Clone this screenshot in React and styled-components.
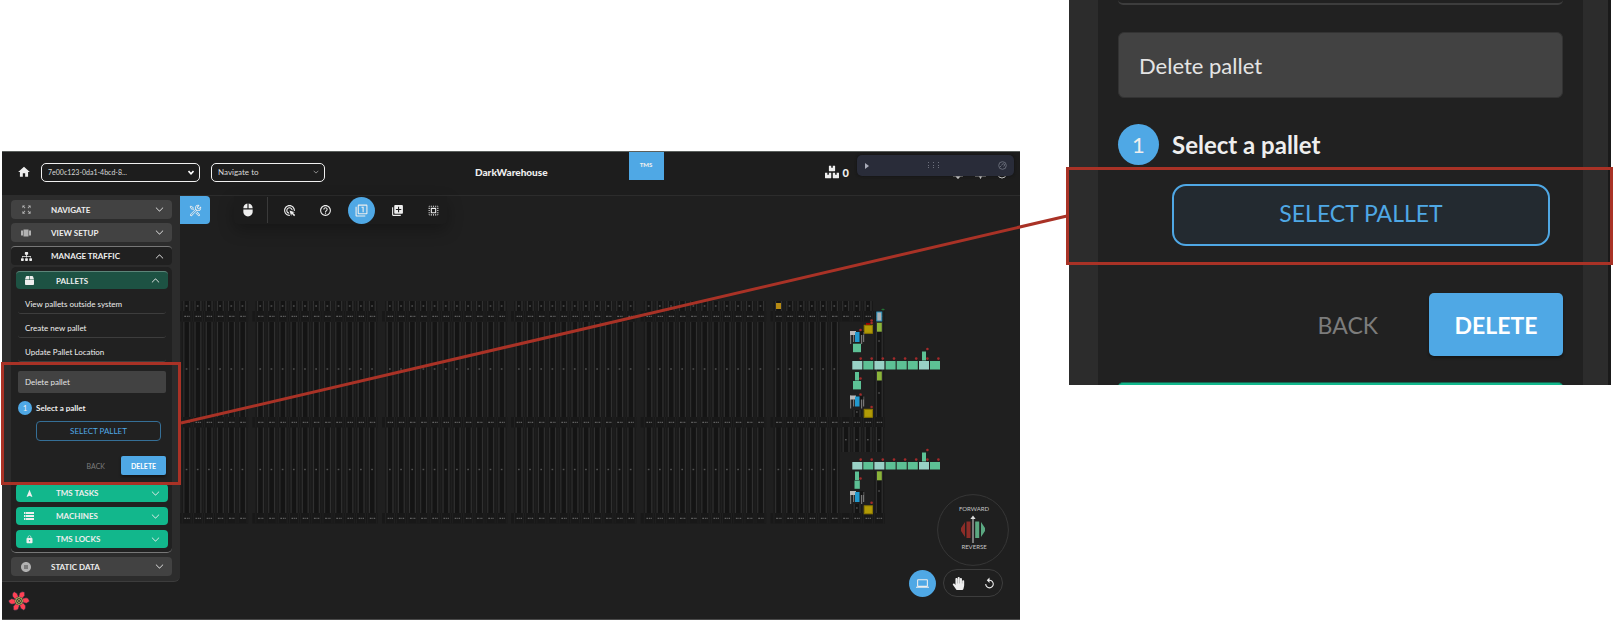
import React from "react";
import styled, { createGlobalStyle, css } from "styled-components";
import {
  MdHome, MdMouse, MdAdsClick, MdHelpOutline, MdFilter1, MdLibraryAdd, MdSelectAll,
  MdZoomOutMap, MdViewCarousel, MdNavigation, MdStorage, MdLock, MdPauseCircleFilled,
  MdLaptop, MdReplay,
} from "react-icons/md";
import { FaSitemap, FaBox, FaBoxes, FaHandPaper } from "react-icons/fa";
import { VscTools } from "react-icons/vsc";
import { BsChevronDown, BsChevronUp } from "react-icons/bs";

const blue = "#4fa8e5";
const red = "#a93226";

const GlobalStyle = createGlobalStyle`
  * { box-sizing: border-box; }
  body { margin: 0; background: #fff; font-family: Lato, "Liberation Sans", sans-serif; color: #eee; }
  button, select { font: inherit; color: inherit; margin: 0; padding: 0; border: 0; background: none; cursor: pointer; }
  svg { display: block; flex: none; }
`;

const Page = styled.main`
  position: relative;
  display: grid;
  grid-template-columns: minmax(0, 1fr) 542px;
  gap: 49px;
  align-items: start;
  padding: 0 2px;
`;

/* ---------- application window ---------- */

const AppWindow = styled.section`
  margin-top: 151px;
  background: #1f1f1f;
  border-top: 1px solid #5a5f5c;
`;

const Header = styled.header`
  position: relative;
  display: flex;
  align-items: center;
  height: 44px;
  padding: 0 6px 3px 15px;
  background: #1d1d1d;
  border-bottom: 1px solid #2c2c2c;
  font-size: 8px;
`;

const SelectBox = styled.label`
  display: flex;
  align-items: center;
  width: ${(p) => p.$width};
  height: 19px;
  margin-left: 10px;
  padding: 0 5px 0 6px;
  border: 1px solid #f0f0f0;
  border-radius: 5px;
  color: #d8d8d8;
  font-size: ${(p) => (p.$dense ? "7px" : "8px")};

  & + & { margin-left: 11px; }
  select { flex: 1; min-width: 0; appearance: none; outline: 0; }
`;

const Title = styled.h1`
  margin: 0 0 0 150px;
  font-size: 10px;
  line-height: 14px;
  font-weight: 900;
`;

const TmsTab = styled.button`
  align-self: flex-start;
  height: 28px;
  width: 35px;
  margin-left: 81px;
  padding-bottom: 4px;
  background: ${blue};
  font-size: 6px;
  font-weight: 900;
`;

const PalletCount = styled.div`
  display: flex;
  align-items: center;
  gap: 4px;
  margin-left: auto;
  margin-right: 8px;
  font-size: 11px;
  font-weight: 900;
`;

const StatusArea = styled.div`
  position: relative;
  align-self: flex-start;
  width: 157px;
  margin-top: 3px;
`;

const FloatingBar = styled.div`
  position: relative;
  display: flex;
  align-items: center;
  justify-content: space-between;
  height: 21px;
  padding: 0 7px;
  border-radius: 5px;
  background: #292c39;
  box-shadow: 0 0 3px #111;
  color: #777b88;
`;

const HiddenIcons = styled.div`
  position: absolute;
  top: 10px;
  right: 8px;
`;

const Stage = styled.div`
  position: relative;
  display: flex;
  align-items: flex-start;
  min-height: 424px;
  border-bottom: 1px solid #4a4a4a;
`;

const MapDrawing = styled.svg`
  position: absolute;
  inset: 0;
  width: 100%;
  height: 100%;
`;

const LeftColumn = styled.div`
  position: relative;
  width: 178px;
`;

const Sidebar = styled.nav`
  display: flex;
  flex-direction: column;
  gap: 4px;
  padding: 4px 8px 5px 9px;
  background: #2c2c2c;
  border-bottom: 1px solid #3c3c3c;
  border-radius: 0 0 6px 0;
`;

const Group = styled.div`
  display: flex;
  flex-direction: column;
  gap: 2px;
`;

const sectionTones = {
  grey: css`background: #424242;`,
  open: css`background: #202020; border-top: 1px solid #777;`,
  darkGreen: css`background: #1d5243; border-top: 1px solid #5c8579;`,
  green: css`background: #12b78c;`,
};

const SectionButton = styled.button`
  display: grid;
  grid-template-columns: ${(p) => (p.$nested ? "38px" : "36px")} 1fr 10px;
  align-items: center;
  width: 100%;
  height: ${(p) => (p.$nested ? "18px" : "19px")};
  padding: 0 7px 0 ${(p) => (p.$nested ? "2px" : "4px")};
  border-radius: 4px;
  font-size: 8px;
  font-weight: 700;
  text-align: left;
  ${(p) => sectionTones[p.$tone]}
`;

const IconSlot = styled.span`
  display: grid;
  width: 22px;
  place-items: center;
  opacity: ${(p) => (p.$dim ? 0.65 : 1)};
`;

const TrafficPanel = styled.div`
  display: flex;
  flex-direction: column;
  padding: 4px 4px 4px 5px;
  background: #212121;
  border-bottom: 1px solid #777;
  border-radius: 5px;
`;

const TaskStack = styled.div`
  display: flex;
  flex-direction: column;
  gap: 5px;
`;

const TaskArea = styled.div`
  display: flex;
  flex-direction: column;
  padding: 1px 2px 0;
`;

const TaskLink = styled.button`
  height: 24px;
  padding: 5px 7px 0;
  border-bottom: 1px solid #3d3d3d;
  border-radius: 3px;
  font-size: 8px;
  text-align: left;
`;

const ReactFlower = styled.button`
  display: block;
  margin: 8px 0 0 6px;
`;

const ToolsButton = styled.button`
  position: relative;
  display: grid;
  place-items: center;
  width: 30px;
  height: 28px;
  border-radius: 0 4px 4px 0;
  background: ${blue};
`;

const Toolbar = styled.div`
  position: relative;
  display: flex;
  align-items: center;
  height: 28px;
  margin-left: 24px;
  border-radius: 0 0 4px 4px;
  background: #1c1c1c;
  box-shadow: 0 6px 16px rgba(0, 0, 0, 0.28);
`;

const ToolSlot = styled.button`
  display: grid;
  place-items: center;
  width: 27px;
  height: 27px;
  margin-right: ${(p) => (p.$first ? "6px" : "9px")};
  border-radius: 50%;
  background: ${(p) => (p.$active ? blue : "transparent")};
  &:last-child { margin-right: 0; }
`;

const Divider = styled.span`
  width: 1px;
  height: 26px;
  margin-right: 8px;
  background: #3a3a3a;
`;

const ViewControls = styled.div`
  position: absolute;
  right: 17px;
  bottom: 22px;
  display: flex;
  align-items: center;
  gap: 7px;
`;

const RoundButton = styled.button`
  display: grid;
  place-items: center;
  width: 27px;
  height: 27px;
  border-radius: 50%;
  background: ${blue};
`;

const Pill = styled.div`
  display: flex;
  align-items: center;
  justify-content: space-between;
  width: 60px;
  height: 28px;
  padding: 0 6px 0 8px;
  border: 1px solid #3d3d3d;
  border-radius: 14px;
`;

/* ---------- delete pallet form, compact and enlarged ---------- */

const FormTitle = styled.div`
  display: flex;
  flex: none;
  align-items: center;
  height: ${(p) => (p.$large ? "66px" : "22px")};
  margin-top: ${(p) => (p.$large ? "27px" : "9px")};
  padding: 0 ${(p) => (p.$large ? "20px" : "7px")};
  border: ${(p) => (p.$large ? "1px solid #333" : "0")};
  border-radius: ${(p) => (p.$large ? "6px" : "2px")};
  background: #424242;
  color: #e4e4e4;
  font-size: ${(p) => (p.$large ? "22px" : "8px")};
`;

const StepRow = styled.div`
  display: flex;
  flex: none;
  align-items: center;
  gap: ${(p) => (p.$large ? "13px" : "4px")};
  margin-top: ${(p) => (p.$large ? "26px" : "8px")};
  font-size: ${(p) => (p.$large ? "24px" : "8px")};
  line-height: 1;
  font-weight: 700;
`;

const StepNumber = styled.span`
  display: grid;
  place-items: center;
  width: ${(p) => (p.$large ? "41px" : "14px")};
  height: ${(p) => (p.$large ? "41px" : "14px")};
  border-radius: 50%;
  background: ${blue};
  font-size: ${(p) => (p.$large ? "22px" : "8px")};
  font-weight: 400;
`;

const SelectPallet = styled.button`
  flex: none;
  height: ${(p) => (p.$large ? "62px" : "20px")};
  margin: ${(p) => (p.$large ? "19px 13px 0 54px" : "6px 5px 0 18px")};
  padding-bottom: ${(p) => (p.$large ? "4px" : "1px")};
  border: ${(p) => (p.$large ? "2px" : "1px")} solid ${(p) => (p.$large ? blue : "#356f97")};
  border-radius: ${(p) => (p.$large ? "14px" : "4px")};
  background: ${(p) => (p.$large ? "#232a30" : "transparent")};
  color: ${blue};
  font-size: ${(p) => (p.$large ? "23px" : "8px")};
`;

const Actions = styled.div`
  display: flex;
  flex: none;
  justify-content: flex-end;
  align-items: center;
  gap: ${(p) => (p.$large ? "51px" : "16px")};
  margin: ${(p) => (p.$large ? "47px 0 26px" : "15px 0 9px")};
  font-size: ${(p) => (p.$large ? "23px" : "7px")};
`;

const BackButton = styled.button`
  color: #7c7c7c;
`;

const DeleteButton = styled.button`
  width: ${(p) => (p.$large ? "134px" : "45px")};
  height: ${(p) => (p.$large ? "63px" : "19px")};
  border-radius: ${(p) => (p.$large ? "5px" : "2px")};
  background: ${blue};
  box-shadow: 0 2px 3px rgba(0, 0, 0, 0.4);
  color: #fff;
  font-weight: 700;
`;

/* ---------- enlarged crop ---------- */

const Crop = styled.section`
  position: relative;
  display: flex;
  height: 385px;
  background: #1a1a1a;
  padding-right: 3px;
`;

const CropPanel = styled.div`
  flex: 1;
  min-width: 0;
  padding: 0 25px 0 29px;
  background: #2c2c2c;
`;

const CropBody = styled.div`
  display: flex;
  flex-direction: column;
  height: 100%;
  padding: 0 20px;
  background: #212121;
  overflow: hidden;
`;

const CropRule = styled.div`
  height: 5px;
  flex: none;
  border-bottom: 2px solid #3d3d3d;
  border-radius: 0 0 5px 5px;
`;

const NextSection = styled.div`
  height: 20px;
  flex: none;
  border-top: 1px solid #156b54;
  border-radius: 5px 5px 0 0;
  background: #12b78c;
`;

/* ---------- red annotations lying over both ---------- */

const SourceFrame = styled.div`
  position: absolute;
  top: 166px;
  left: -1px;
  right: -1px;
  height: 123px;
  border: 3px solid ${red};
  z-index: 1;
  pointer-events: none;
`;

const CropFrame = styled.div`
  position: absolute;
  top: 167px;
  left: -3px;
  right: -2px;
  height: 98px;
  border: 3px solid ${red};
  pointer-events: none;
`;

const Connector = styled.svg`
  position: absolute;
  top: 216px;
  left: 181px;
  width: calc(100% - 727px);
  height: 207px;
  overflow: visible;
  pointer-events: none;
`;

function DeletePalletForm({ large }) {
  return (
    <>
      <FormTitle $large={large}>Delete pallet</FormTitle>
      <StepRow $large={large}>
        <StepNumber $large={large}>1</StepNumber>
        Select a pallet
      </StepRow>
      <SelectPallet $large={large}>SELECT PALLET</SelectPallet>
      <Actions $large={large}>
        <BackButton>BACK</BackButton>
        <DeleteButton $large={large}>DELETE</DeleteButton>
      </Actions>
    </>
  );
}

function Section({ icon, label, tone = "grey", nested, open, dim }) {
  return (
    <SectionButton $tone={tone} $nested={nested} aria-expanded={!!open}>
      <IconSlot $dim={dim}>{icon}</IconSlot>
      {label}
      {open ? <BsChevronUp size={9} /> : <BsChevronDown size={9} />}
    </SectionButton>
  );
}

/* ---------- warehouse map ---------- */

const PITCH = 11.18;
const bays = [
  { start: 186.7, count: 6 },
  { start: 260.4, count: 11 },
  { start: 390, count: 11 },
  { start: 519, count: 11 },
  { start: 648.8, count: 11 },
  { start: 778.5, count: 10 },
];

function Lane({ x, y, h }) {
  return (
    <g>
      <rect x={x - 5} y={y} width="10" height={h} fill="#191919" />
      <rect x={x - 3.4} y={y} width="1.2" height={h} fill="#303030" />
      <rect x={x + 2.4} y={y} width="1.2" height={h} fill="#303030" />
      <rect x={x - 2} y={y} width="4" height={h} fill="#141414" />
    </g>
  );
}

function Dash({ x, y }) {
  return <path d={`M${x - 2.4} ${y}h1.8m.8 0h1m.6 0h1.2`} stroke="#606060" strokeWidth="1.2" />;
}

function Dot({ x, y }) {
  return <rect x={x - 1} y={y - 0.7} width="1.7" height="1.4" fill="#525252" />;
}

function Racks() {
  return bays.map((bay, b) => {
    const xs = Array.from({ length: bay.count }, (_, i) => bay.start + i * PITCH);
    const end = xs[xs.length - 1];
    const last = b === bays.length - 1;
    return (
      <g key={bay.start}>
        {xs.map((x) => (
          <g key={x}>
            {x < 875 && <Lane x={x} y={301} h={10} />}
            {x < 875 && <Dot x={x} y={306} />}
            {!(last && x > 840) && (
              <>
                <Lane x={x} y={322} h={95} />
                <Lane x={x} y={427} h={86} />
                <Dot x={x} y={369} />
                <Dot x={x} y={469.5} />
              </>
            )}
          </g>
        ))}
        {[311, 417, 513].map((y) => (
          <g key={y}>
            <rect x={bay.start - 8} y={y} width={end - bay.start + 13.5} height="10.5" fill="#181818" />
            {xs.map((x) => (
              <g key={x}>
                <path d={`M${x - 4.5} ${y}v10.5m9 0v-10.5`} stroke="#202020" />
                <Dash x={x} y={y + 5.3} />
              </g>
            ))}
          </g>
        ))}
      </g>
    );
  });
}

const cellXs = [852.3, 863.3, 874.4, 885.6, 896.7, 907.8, 919, 930];
const redMarks = [
  [860.5, 330], [871.6, 320.5], [871.6, 323], [927.4, 349], [860.5, 378.5], [860.5, 394.5],
  [871.6, 407], [927.4, 450], [860.5, 478.5], [871.6, 502.7],
];

function Shuttle({ y }) {
  return (
    <g>
      <path d={`M850.6 ${y}v13m3-9v7m8-11v13m2-12v10`} stroke="#777" strokeWidth="1.2" fill="none" />
      <rect x="850" y={y} width="6" height="4" fill="#b9b9b9" />
      <rect x="860" y={y} width="3.5" height="4" fill="#151515" />
      <rect x="855" y={y + 1} width="4.5" height="10" fill="#2199ce" />
    </g>
  );
}

function Equipment() {
  return (
    <g>
      <Lane x={879.2} y={322} h={95} />
      {[846, 857, 868, 879.2].map((x) => (
        <g key={x}>
          <Lane x={x} y={427} h={25} />
          <Dot x={x} y={439.7} />
        </g>
      ))}
      <Lane x={879.2} y={471} h={42} />
      <Lane x={857} y={410} h={7} />
      <Lane x={857} y={504} h={9} />
      {[341, 393, 491].map((y) => <Dot key={y} x={879.2} y={y} />)}
      {[412, 508].map((y) => <Dot key={y} x={857} y={y} />)}
      <rect x="776" y="303" width="5" height="6" fill="#b68a13" />
      <rect x="876.8" y="312" width="5" height="9" fill="#adb2b5" stroke="#278fbd" />
      <path d="M881.5 309.5h3m-1.5-1v2" stroke="#247235" />
      {[322.7, 371.5, 471.3].map((y) => <rect key={y} x="877" y={y} width="4.8" height="9" fill="#8bb43a" />)}
      <rect x="866" y="323" width="4" height="3" fill="#900" />
      {[325.3, 409.3, 505.8].map((y) => (
        <rect key={y} x="864.2" y={y} width="8.2" height="8" fill="#b29b06" stroke="#8d7900" />
      ))}
      <Shuttle y={331} />
      <Shuttle y={395.5} />
      <Shuttle y={491} />
      <rect x="853" y="343.7" width="8" height="8.5" fill="#5dc195" />
      <rect x="855" y="372" width="4" height="8.5" fill="#5dc195" />
      <rect x="853" y="381" width="8" height="8.4" fill="#5dc195" />
      <rect x="855" y="471.5" width="4" height="8.5" fill="#5dc195" />
      <rect x="854.5" y="480.5" width="5.3" height="8.3" fill="#5dc195" />
      <rect x="922" y="351.5" width="4" height="9" fill="#5dc195" />
      <rect x="922" y="452.5" width="4" height="9" fill="#5dc195" />
      {[361, 462].map((y) =>
        cellXs.map((x, i) => (
          <g key={`${x}-${y}`}>
            <rect x={x} y={y} width="10" height={y === 361 ? 8.5 : 7.5} fill={[0, 2, 6].includes(i) ? "#98d1c5" : "#5dc195"} />
            <circle cx={x + 8.4} cy={y - 2.4} r="1.3" fill="#a32a2a" />
          </g>
        ))
      )}
      {redMarks.map(([x, y]) => <circle key={`${x}-${y}`} cx={x} cy={y} r="1.3" fill="#a32a2a" />)}
    </g>
  );
}

function Compass() {
  return (
    <g>
      <circle cx="973" cy="530" r="35.4" fill="none" stroke="#363636" />
      <g fontSize="6" fill="#c5c5c5" textAnchor="middle">
        <text x="974" y="511">FORWARD</text>
        <text x="974" y="549">REVERSE</text>
      </g>
      <path d="M965 522v15l-4-6v-3zM966.5 521.5h4v16.5h-4z" fill="#8d2d28" />
      <path d="M975.2 521.5h4v16.5h-4zM981 522v15l4-6v-3z" fill="#5ba881" />
      <path d="M973 518v25" stroke="#bbb" strokeWidth="1.2" />
      <path d="M973 515.5l2.6 3.6h-5.2z" fill="#ddd" />
    </g>
  );
}

function Flower() {
  return (
    <svg width="22" height="22" viewBox="-11 -11 22 22">
      {[0, 60, 120, 180, 240, 300].map((a) => (
        <path key={a} transform={`rotate(${a})`} d="M3-2.500L7-3.200C9-3.200 10.500-1 10.300.5L7.500 2.200 3.500 1.500Z" fill="#ff4154" stroke="#173347" strokeWidth=".5" />
      ))}
      <circle r="4.3" fill="#26313a" />
      <circle r="3.4" fill="none" stroke="#c9c35a" />
      <circle r="1.5" fill="none" stroke="#c9c35a" strokeWidth=".8" />
    </svg>
  );
}

function GripDots() {
  return (
    <svg width="12" height="7" viewBox="0 0 12 7" fill="#6d717d">
      {[0, 5, 10].map((x) => [0, 3, 5].map((y) => <rect key={`${x}-${y}`} x={x} y={y} width="1" height="1" />))}
    </svg>
  );
}

export default function App() {
  return (
    <>
      <GlobalStyle />
      <Page>
        <AppWindow>
          <Header>
            <MdHome size={14} />
            <SelectBox $width="159px" $dense>
              <select aria-label="Layout"><option>7e00c123-0da1-4bcd-8...</option></select>
              <svg width="6" height="5" viewBox="0 0 6 5"><path d="M.5 1L3 3.7 5.5 1" fill="none" stroke="#fff" strokeWidth="1.6" /></svg>
            </SelectBox>
            <SelectBox $width="114px">
              <select aria-label="Navigate to"><option>Navigate to</option></select>
              <BsChevronDown size={6} />
            </SelectBox>
            <Title>DarkWarehouse</Title>
            <TmsTab>TMS</TmsTab>
            <PalletCount><FaBoxes size={14} />0</PalletCount>
            <StatusArea>
              <HiddenIcons>
                <svg width="54" height="14" viewBox="0 0 54 14" fill="#d8d8d8">
                  <path d="M1 10h10v1.6H8.500L6 14 3.500 11.600H1zM23 10h11v1.500h-4L28.500 14 27 11.500h-4z" />
                  <circle cx="50" cy="9" r="4" fill="none" stroke="#d8d8d8" />
                </svg>
              </HiddenIcons>
              <FloatingBar>
                <svg width="6" height="8" viewBox="0 0 6 8"><path d="M1 1l4 3-4 3z" fill="#a9acb8" /></svg>
                <GripDots />
                <svg width="9" height="9" viewBox="0 0 9 9" fill="none" stroke="#676b77"><circle cx="4.5" cy="4.500" r="3.800" /><path d="M2 6l1.500-1.500M4 4a1.300 1.300 0 1 1 1.500 1.300" /></svg>
              </FloatingBar>
            </StatusArea>
          </Header>

          <Stage>
            <MapDrawing viewBox="2 196 1018 423" preserveAspectRatio="xMinYMin meet">
              <Racks />
              <Equipment />
              <Compass />
            </MapDrawing>

            <LeftColumn>
              <Sidebar>
                <Section icon={<MdZoomOutMap size={11} />} label="NAVIGATE" dim />
                <Section icon={<MdViewCarousel size={12} />} label="VIEW SETUP" dim />
                <Group>
                  <Section icon={<FaSitemap size={11} />} label="MANAGE TRAFFIC" tone="open" open />
                  <TrafficPanel>
                    <Section icon={<FaBox size={9} />} label="PALLETS" tone="darkGreen" nested open />
                    <TaskArea>
                      <TaskLink>View pallets outside system</TaskLink>
                      <TaskLink>Create new pallet</TaskLink>
                      <TaskLink>Update Pallet Location</TaskLink>
                      <DeletePalletForm />
                    </TaskArea>
                    <TaskStack>
                      <Section icon={<MdNavigation size={9} />} label="TMS TASKS" tone="green" nested />
                      <Section icon={<MdStorage size={12} />} label="MACHINES" tone="green" nested />
                      <Section icon={<MdLock size={9} />} label="TMS LOCKS" tone="green" nested />
                    </TaskStack>
                  </TrafficPanel>
                </Group>
                <Section icon={<MdPauseCircleFilled size={12} />} label="STATIC DATA" dim />
              </Sidebar>
              <ReactFlower aria-label="Query tools"><Flower /></ReactFlower>
              <SourceFrame />
            </LeftColumn>

            <ToolsButton aria-label="Tools"><VscTools size={13} /></ToolsButton>
            <Toolbar>
              <ToolSlot $first aria-label="Mouse"><MdMouse size={14} /></ToolSlot>
              <Divider />
              <ToolSlot aria-label="Click"><MdAdsClick size={13} /></ToolSlot>
              <ToolSlot aria-label="Help"><MdHelpOutline size={13} /></ToolSlot>
              <ToolSlot $active aria-label="Single selection"><MdFilter1 size={13} /></ToolSlot>
              <ToolSlot aria-label="Add to selection"><MdLibraryAdd size={13} /></ToolSlot>
              <ToolSlot aria-label="Select all"><MdSelectAll size={13} /></ToolSlot>
            </Toolbar>

            <ViewControls>
              <RoundButton aria-label="Screen"><MdLaptop size={13} /></RoundButton>
              <Pill>
                <button aria-label="Pan"><FaHandPaper size={13} /></button>
                <button aria-label="Reset view"><MdReplay size={13} /></button>
              </Pill>
            </ViewControls>
          </Stage>
        </AppWindow>

        <Crop>
          <CropPanel>
            <CropBody>
              <CropRule />
              <DeletePalletForm large />
              <NextSection />
            </CropBody>
          </CropPanel>
          <CropFrame />
        </Crop>

        <Connector viewBox="0 0 886 207" preserveAspectRatio="none">
          <path d="M0 207L886 0" stroke={red} strokeWidth="3" vectorEffect="non-scaling-stroke" />
        </Connector>
      </Page>
    </>
  );
}
